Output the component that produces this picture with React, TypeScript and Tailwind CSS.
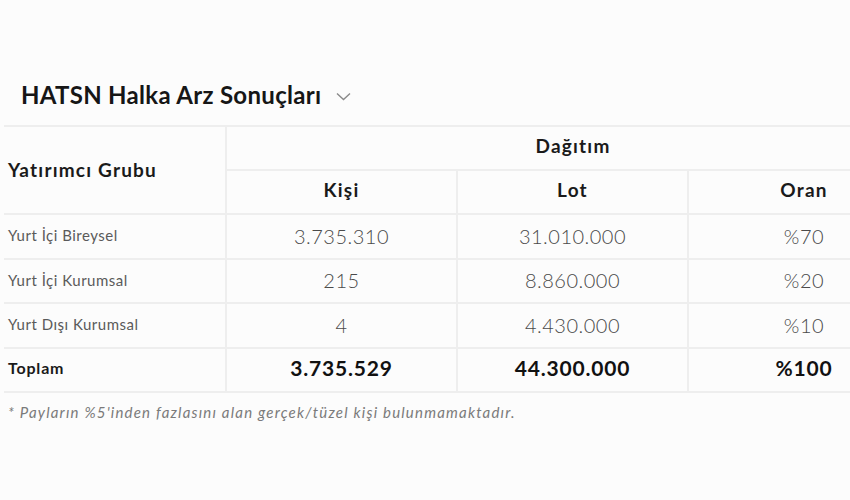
import React from "react";

const rows = [
  ["Yurt İçi Bireysel", "3.735.310", "31.010.000", "%70"],
  ["Yurt İçi Kurumsal", "215", "8.860.000", "%20"],
  ["Yurt Dışı Kurumsal", "4", "4.430.000", "%10"],
];

export default function App() {
  return (
    <div
      className="w-[850px] h-[500px] overflow-hidden bg-[#fcfcfc] text-[#1a1a1a]"
      style={{ fontFamily: "Lato, 'Noto Sans', sans-serif" }}
    >
      <div className="pt-[74px] pl-[21px] flex items-center h-[125px] pb-[10px]">
        <h2 className="text-[24px] font-bold tracking-[0.3px] text-[#161616] leading-none">
          HATSN Halka Arz Sonuçları
        </h2>
        <svg className="ml-[15px] mt-[4px]" width="15" height="9" viewBox="0 0 15 9" fill="none">
          <path d="M1 1.5 L7.5 7.5 L14 1.5" stroke="#8a8a8a" strokeWidth="1.4" />
        </svg>
      </div>
      <div className="pl-[4px]">
        <table className="border-collapse w-[915px] table-fixed">
          <colgroup>
            <col className="w-[222px]" />
            <col className="w-[231px]" />
            <col className="w-[231px]" />
            <col className="w-[231px]" />
          </colgroup>
          <thead>
            <tr className="h-[44px] border-t-2 border-[#eeeeee]">
              <th
                rowSpan={2}
                className="text-left pl-[4px] text-[19px] tracking-[1.2px] font-bold text-[#1a1a1a] border-r-2 border-b-2 border-[#eeeeee]"
              >
                Yatırımcı Grubu
              </th>
              <th colSpan={3} className="pb-[3px] text-[19px] tracking-[1.2px] font-bold text-[#1a1a1a] border-b-2 border-[#eeeeee]">
                Dağıtım
              </th>
            </tr>
            <tr className="h-[44px]">
              <th className="pb-[3px] text-[19px] tracking-[1.2px] font-bold border-r-2 border-b-2 border-[#eeeeee]">Kişi</th>
              <th className="pb-[3px] text-[19px] tracking-[1.2px] font-bold border-r-2 border-b-2 border-[#eeeeee]">Lot</th>
              <th className="pb-[3px] text-[19px] tracking-[1.2px] font-bold border-b-2 border-[#eeeeee]">Oran</th>
            </tr>
          </thead>
          <tbody>
            {rows.map((r, i) => (
              <tr key={r[0]} className={i === 1 ? "h-[44px]" : "h-[45px]"}>
                <td className="pl-[4px] pb-[2px] text-[15px] tracking-[0.5px] text-[#5a5a5a] border-r-2 border-b-2 border-[#eeeeee]">{r[0]}</td>
                <td className="pb-[2px] text-center text-[20px] tracking-[0.5px] font-light text-[#4a4a4a] border-r-2 border-b-2 border-[#eeeeee]">{r[1]}</td>
                <td className="pb-[2px] text-center text-[20px] tracking-[0.5px] font-light text-[#4a4a4a] border-r-2 border-b-2 border-[#eeeeee]">{r[2]}</td>
                <td className="pb-[2px] text-center text-[20px] tracking-[0.5px] font-light text-[#4a4a4a] border-b-2 border-[#eeeeee]">{r[3]}</td>
              </tr>
            ))}
            <tr className="h-[44px]">
              <td className="pl-[4px] pb-[4px] text-[16px] tracking-[0.8px] font-bold text-[#1a1a1a] border-r-2 border-b-2 border-[#eeeeee]">Toplam</td>
              <td className="pb-[4px] text-center text-[21px] tracking-[0.8px] font-bold text-[#111] border-r-2 border-b-2 border-[#eeeeee]">3.735.529</td>
              <td className="pb-[4px] text-center text-[21px] tracking-[0.8px] font-bold text-[#111] border-r-2 border-b-2 border-[#eeeeee]">44.300.000</td>
              <td className="pb-[4px] text-center text-[21px] tracking-[0.8px] font-bold text-[#111] border-b-2 border-[#eeeeee]">%100</td>
            </tr>
          </tbody>
        </table>
        <p className="pl-[4px] mt-[8px] text-[15px] tracking-[1.2px] italic text-[#7a7a7a]">
          * Payların %5'inden fazlasını alan gerçek/tüzel kişi bulunmamaktadır.
        </p>
      </div>
    </div>
  );
}
